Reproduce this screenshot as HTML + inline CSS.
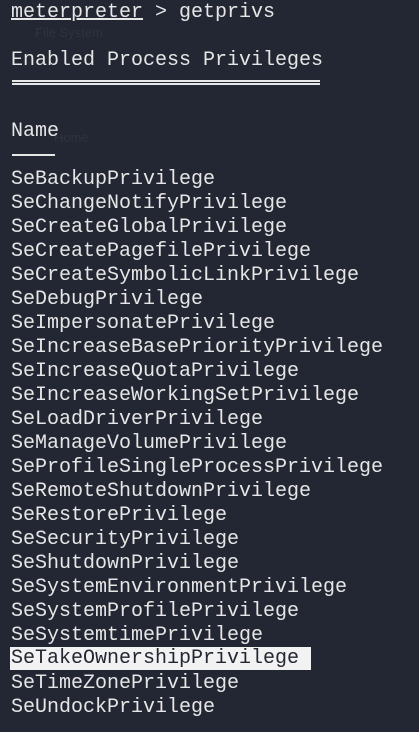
<html><head><style>
body{margin:0;width:419px;height:732px;background:#232733;overflow:hidden;position:relative;font-family:"Liberation Mono",monospace;font-size:20px;color:#e6e6e6}
.l{position:absolute;left:11px;height:24px;line-height:24px;white-space:pre;margin-top:2px}
.u{text-decoration:underline}
.hl{background:#f2f2f2;color:#232733;padding-right:12px;margin-left:-1px;padding-left:1px}
.w{position:absolute;color:#2f3340;font-family:"Liberation Sans",sans-serif;font-size:13px}
</style></head><body>
<div class="w" style="left:35px;top:25px">File System</div>
<div class="w" style="left:54px;top:130px">Home</div>
<div class="l" style="top:-1px"><span class="u">meterpreter</span> &gt; getprivs</div>
<div class="l" style="top:47px">Enabled Process Privileges</div>
<div style="position:absolute;left:12px;top:80px;width:308px;height:1px;border-top:2px solid #e6e6e6;border-bottom:2px solid #e6e6e6"></div>
<div class="l" style="top:118px">Name</div>
<div style="position:absolute;left:12px;top:154px;width:43px;height:2px;background:#e6e6e6"></div>
<div class="l" style="top:166px">SeBackupPrivilege</div>
<div class="l" style="top:190px">SeChangeNotifyPrivilege</div>
<div class="l" style="top:214px">SeCreateGlobalPrivilege</div>
<div class="l" style="top:238px">SeCreatePagefilePrivilege</div>
<div class="l" style="top:262px">SeCreateSymbolicLinkPrivilege</div>
<div class="l" style="top:286px">SeDebugPrivilege</div>
<div class="l" style="top:310px">SeImpersonatePrivilege</div>
<div class="l" style="top:334px">SeIncreaseBasePriorityPrivilege</div>
<div class="l" style="top:358px">SeIncreaseQuotaPrivilege</div>
<div class="l" style="top:382px">SeIncreaseWorkingSetPrivilege</div>
<div class="l" style="top:406px">SeLoadDriverPrivilege</div>
<div class="l" style="top:430px">SeManageVolumePrivilege</div>
<div class="l" style="top:454px">SeProfileSingleProcessPrivilege</div>
<div class="l" style="top:478px">SeRemoteShutdownPrivilege</div>
<div class="l" style="top:502px">SeRestorePrivilege</div>
<div class="l" style="top:526px">SeSecurityPrivilege</div>
<div class="l" style="top:550px">SeShutdownPrivilege</div>
<div class="l" style="top:574px">SeSystemEnvironmentPrivilege</div>
<div class="l" style="top:598px">SeSystemProfilePrivilege</div>
<div class="l" style="top:622px">SeSystemtimePrivilege</div>
<div class="l" style="top:645px"><span class="hl">SeTakeOwnershipPrivilege</span></div>
<div class="l" style="top:670px">SeTimeZonePrivilege</div>
<div class="l" style="top:694px">SeUndockPrivilege</div>
</body></html>
